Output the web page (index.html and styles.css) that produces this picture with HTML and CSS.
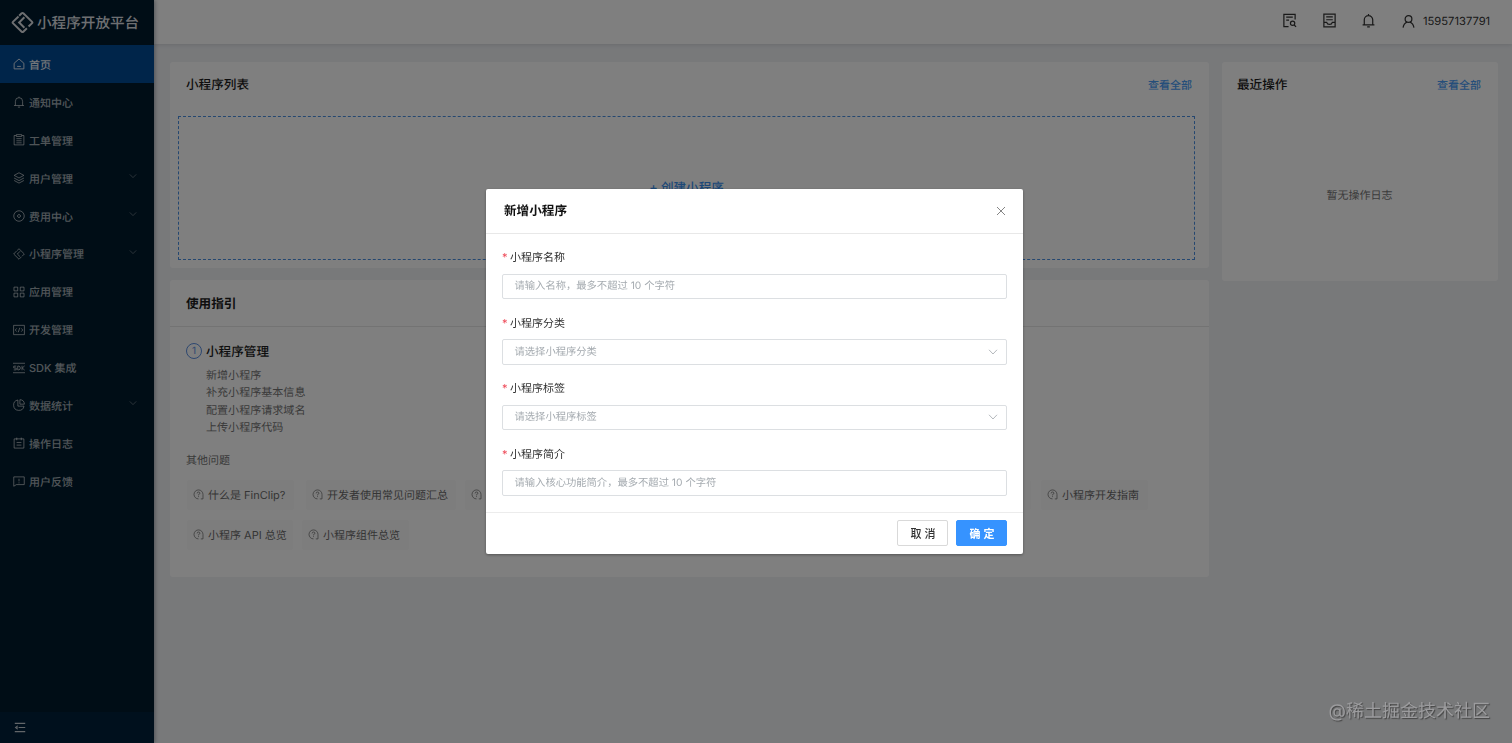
FILE: index.html
```html
<!DOCTYPE html>
<html lang="zh-CN">
<head>
<meta charset="utf-8">
<title>小程序开放平台</title>
<link rel="stylesheet" href="styles.css">
</head>
<body>
<div class="app">
  <aside class="sidebar">
    <div class="brand">
      <svg class="brand-logo" viewBox="0 0 22 22"><path d="M7.200 5.300 1.800 10.400q-.6.600 0 1.200l8.400 8.200q.8.700 1.600 0l3.400-3.300M7.800 4.600l2.400-2.400q.8-.7 1.600 0l8.400 8.200q.6.600 0 1.200l-3.400 3.300M12.800 6 7.800 11l5 5"/></svg>
      <span>小程序开放平台</span>
    </div>
    <nav class="menu">
      <a class="item active"><svg viewBox="0 0 16 16"><path d="M1.500 7 8 1.300 14.500 7v7.500h-13zM5.500 11.200h5"/></svg><span>首页</span></a>
      <a class="item"><svg viewBox="0 0 16 16"><path d="M3.200 12.500V7a4.800 4.800 0 0 1 9.600 0v5.500M1.300 12.700h13.400M8 .8v1.400M6.500 14.800h3"/></svg><span>通知中心</span></a>
      <a class="item"><svg viewBox="0 0 16 16"><path d="M4 2H1.500v12.500h13V2H12M4.500.8h7v2.500h-7zM4.500 6.200h7M4.500 9h7M4.500 11.800h7"/></svg><span>工单管理</span></a>
      <a class="item"><svg viewBox="0 0 16 16"><path d="m8 1 6.500 3.500L8 8 1.500 4.500zM1.500 8 8 11.500 14.500 8M1.500 11.300 8 14.800l6.500-3.500"/></svg><span>用户管理</span><svg class="arrow" viewBox="0 0 10 10"><path d="m1 3 4 4 4-4"/></svg></a>
      <a class="item"><svg viewBox="0 0 16 16"><circle cx="8" cy="8" r="7"/><path d="m8 5.500 2.500 2.500L8 10.500 5.500 8zM8 7.500v1"/></svg><span>费用中心</span><svg class="arrow" viewBox="0 0 10 10"><path d="m1 3 4 4 4-4"/></svg></a>
      <a class="item"><svg viewBox="0 0 16 16"><path d="M5 3.800.9 8 8 15l3.200-3.200M5.500 3.300 8 1l7.100 7-3 3M9.500 4.300 5.800 8l3.700 3.700"/></svg><span>小程序管理</span><svg class="arrow" viewBox="0 0 10 10"><path d="m1 3 4 4 4-4"/></svg></a>
      <a class="item"><svg viewBox="0 0 16 16"><path d="M1.300 1.500h5v5h-5zM9.700 1.500h5v5h-5zM1.300 9.500h5v5h-5zM9.700 9.500h5v5h-5z"/></svg><span>应用管理</span></a>
      <a class="item"><svg viewBox="0 0 16 16"><path d="M.8 1.800h14.400v12.400H.8zM5 5.800 3 8l2 2.200M11 5.800 13 8l-2 2.200M9 5l-2 6"/></svg><span>开发管理</span></a>
      <a class="item"><svg class="wide" viewBox="0 0 16 16"><path d="M0 1.700h16M0 14.300h16M4.300 5.500H1V8h3.300v2.500H1M6.300 5.500v5h1.500q2-.3 2-2.500t-2-2.500zM12 5v6M15.500 5.200 12.300 8l3.200 2.800"/></svg><span>SDK 集成</span></a>
      <a class="item"><svg viewBox="0 0 16 16"><path d="M6.500 1.300A7 7 0 1 0 14.700 9.500H6.500zM9.200.9v6h6A6.300 6.300 0 0 0 9.200.9z"/></svg><span>数据统计</span><svg class="arrow" viewBox="0 0 10 10"><path d="m1 3 4 4 4-4"/></svg></a>
      <a class="item"><svg viewBox="0 0 16 16"><path d="M1.500 2.500h13v12.300h-13zM5 .8v3.500M11 .8v3.500M4.800 7.300h6.400M4.800 10.800h6.400"/></svg><span>操作日志</span></a>
      <a class="item"><svg viewBox="0 0 16 16"><path d="M1 2.500h14v10.300H4.500L1 15zM8 5v3.500M8 9.800v1.400"/></svg><span>用户反馈</span></a>
    </nav>
    <div class="collapse"><svg viewBox="0 0 12 12"><path d="M.3 1.500h11.400M4.500 6h7.200M.3 10.500h11.400M2.800 4.800 1.200 6l1.600 1.200z"/></svg></div>
  </aside>

  <div class="page">
    <header class="topbar">
      <svg class="tool" viewBox="0 0 16 16"><path d="M7 14.500H2V1.500h12V7M4.500 4.500h7M4.500 7.500h3M13 12.800l2 2"/><circle cx="11.300" cy="11" r="2.300"/></svg>
      <svg class="tool" viewBox="0 0 16 16"><path d="M2 1.200h12v13.600H2zM4.500 4.200h7M4.500 7.200h7M2 10h3q.5 2.200 3 2.200t3-2.200h3"/></svg>
      <svg class="tool" viewBox="0 0 16 16"><path d="M3.500 12.500V7.300a4.500 4.500 0 0 1 9 0v5.200M1.700 12.700h12.600M8 1v1.800M6.600 14.800h2.800"/></svg>
      <svg class="tool user" viewBox="0 0 16 16"><circle cx="8" cy="5.400" r="3.600"/><path d="M2.200 14.500q.7-4.500 4.200-5.900M13.800 14.500q-.7-4.500-4.200-5.900"/></svg>
      <span class="phone">15957137791</span>
    </header>

    <main class="content">
      <div class="primary">
        <section class="card apps">
          <div class="card-head"><h2>小程序列表</h2><a>查看全部</a></div>
          <div class="create"><span>+ 创建小程序</span></div>
        </section>
        <section class="card guide">
          <div class="guide-head"><h2>使用指引</h2></div>
          <div class="step"><span class="num">1</span><h2>小程序管理</h2></div>
          <ul class="steps">
            <li>新增小程序</li>
            <li>补充小程序基本信息</li>
            <li>配置小程序请求域名</li>
            <li>上传小程序代码</li>
          </ul>
          <div class="other">其他问题</div>
          <div class="chips">
            <a class="chip w1"><svg viewBox="0 0 12 12"><path d="M6 10.800A4.900 4.900 0 1 1 10.900 6v4.800H8.500M4.500 4.800q0-1.500 1.500-1.500t1.500 1.300Q7.500 5.700 6 6.200v.7M6 7.900v.9"/></svg>什么是 FinClip?</a>
            <a class="chip w2"><svg viewBox="0 0 12 12"><path d="M6 10.800A4.900 4.900 0 1 1 10.900 6v4.800H8.500M4.500 4.800q0-1.500 1.500-1.500t1.500 1.300Q7.500 5.700 6 6.200v.7M6 7.900v.9"/></svg>开发者使用常见问题汇总</a>
            <a class="chip w3"><svg viewBox="0 0 12 12"><path d="M6 10.800A4.900 4.900 0 1 1 10.900 6v4.800H8.500M4.500 4.800q0-1.500 1.500-1.500t1.500 1.300Q7.500 5.700 6 6.200v.7M6 7.900v.9"/></svg></a>
            <a class="chip w4"><svg viewBox="0 0 12 12"><path d="M6 10.800A4.900 4.900 0 1 1 10.900 6v4.800H8.500M4.500 4.800q0-1.500 1.500-1.500t1.500 1.300Q7.500 5.700 6 6.200v.7M6 7.900v.9"/></svg>小程序开发指南</a>
          </div>
          <div class="chips second">
            <a class="chip w5"><svg viewBox="0 0 12 12"><path d="M6 10.800A4.900 4.900 0 1 1 10.900 6v4.800H8.500M4.500 4.800q0-1.500 1.500-1.500t1.500 1.300Q7.500 5.700 6 6.200v.7M6 7.900v.9"/></svg>小程序 API 总览</a>
            <a class="chip w6"><svg viewBox="0 0 12 12"><path d="M6 10.800A4.900 4.900 0 1 1 10.900 6v4.800H8.500M4.500 4.800q0-1.500 1.500-1.500t1.500 1.300Q7.500 5.700 6 6.200v.7M6 7.900v.9"/></svg>小程序组件总览</a>
          </div>
        </section>
      </div>
      <section class="card recent">
        <div class="card-head"><h2>最近操作</h2><a>查看全部</a></div>
        <div class="empty">暂无操作日志</div>
      </section>
    </main>
  </div>
</div>

<div class="mask">
  <div class="modal">
    <div class="modal-head"><h3>新增小程序</h3><svg viewBox="0 0 10 10"><path d="m1 1 8 8M9 1 1 9"/></svg></div>
    <div class="form">
      <div class="field"><label><i>*</i>小程序名称</label><div class="input">请输入名称，最多不超过 10 个字符</div></div>
      <div class="field"><label><i>*</i>小程序分类</label><div class="input">请选择小程序分类<svg viewBox="0 0 10 10"><path d="m1 2.800 4 4.200 4-4.200"/></svg></div></div>
      <div class="field"><label><i>*</i>小程序标签</label><div class="input">请选择小程序标签<svg viewBox="0 0 10 10"><path d="m1 2.800 4 4.200 4-4.200"/></svg></div></div>
      <div class="field"><label><i>*</i>小程序简介</label><div class="input">请输入核心功能简介，最多不超过 10 个字符</div></div>
    </div>
    <div class="modal-foot"><button>取 消</button><button class="ok">确 定</button></div>
  </div>
</div>
<div class="watermark">@稀土掘金技术社区</div>
</body>
</html>
```

FILE: styles.css
```css
* { box-sizing: border-box; }
body { margin: 0; overflow: hidden; font-family: Inter, "Noto Sans CJK SC", sans-serif; font-size: 11px; line-height: 16px; text-rendering: geometricPrecision; }
svg { fill: none; stroke: currentColor; flex: none; }
h2, h3 { margin: 0; padding-top: 2px; font-size: 12.6px; line-height: 18px; font-weight: 500; }
.app { display: flex; height: 743px; background: #f0f2f5; }

.sidebar { width: 154px; display: flex; flex-direction: column; background: #001529; background: #001a2c; color: rgba(255,255,255,.65); box-shadow: 1px 0 4px rgba(0,21,41,.35); z-index: 1; }
.brand { height: 45px; padding: 0 0 1px 11px; display: flex; align-items: center; gap: 3px; font-size: 14.600px; font-weight: 500; color: #dcdfe2; white-space: nowrap; }
.brand span { padding-top: 1px; }
.brand-logo { width: 23px; height: 23px; stroke-width: 1.900; }
.menu { flex: 1; }
.item { display: flex; align-items: center; height: 37.900px; padding: 1px 15px 0 13px; gap: 4px; font-weight: 500; }
.item span { padding-top: 1px; }
.item svg { width: 12px; height: 12px; stroke-width: 1.200; }
.item .arrow { width: 8px; height: 8px; margin-left: auto; margin-right: 2px; position: relative; top: -2px; opacity: .65; stroke-width: 1; }
.active { background: #004a94; color: #e8eef5; }
.collapse { height: 31px; padding: 10px 14px; background: #00203a; color: #c4ccd2; }
.collapse svg { display: block; width: 12px; height: 11px; stroke-width: 1.200; }

.page { flex: 1; display: flex; flex-direction: column; }
.topbar { height: 44px; padding: 0 20px 2px 0; display: flex; align-items: center; justify-content: flex-end; background: #fff; box-shadow: 0 1px 4px rgba(0,21,41,.12); color: #333; }
.tool { width: 15px; height: 15px; margin: -2px 24.600px 0 0; stroke-width: 1.300; }
.user { margin: 0 7px 0 0; }
.phone { font-size: 11.200px; width: 69px; white-space: nowrap; }
.content { display: flex; align-items: flex-start; gap: 13px; padding: 18px 14px 0 16px; }
.primary { width: 1039px; display: flex; flex-direction: column; gap: 12px; }
.card { background: #fff; border-radius: 3px; }
.apps { height: 206px; padding: 14px 14px 0 8px; }
.card-head { display: flex; justify-content: space-between; align-items: center; height: 18px; padding: 0 2px 0 8px; }
.card-head a { color: #4a9cf5; font-weight: 500; }
.apps .card-head a { margin-right: 1px; }
.card-head h2, .guide h2 { color: #1c1c1c; }
.create { display: flex; align-items: center; justify-content: center; height: 144px; margin-top: 22px; padding-top: 1px; border: 1px dashed #4a8ee0; color: #3a90ee; font-size: 12.600px; font-weight: 500; }
.guide { height: 297px; }
.guide-head { height: 47px; padding: 14px 16px; border-bottom: 1px solid #e6e6e6; }
.guide-head h2 { font-weight: 600; }
.step { display: flex; align-items: center; gap: 4px; padding: 15px 16px 0; height: 34px; }
.num { width: 16px; height: 16px; margin-top: -1px; border: 1px solid #5b8fe0; border-radius: 50%; color: #5b8fe0; font-size: 10px; line-height: 14px; text-align: center; }
.steps { list-style: none; margin: 6px 0 0; padding: 0 0 0 36px; font-size: 11.050px; line-height: 17.400px; color: #747474; }
.other { margin: 15px 0 0 16px; color: #747474; }
.chips { display: flex; height: 30px; margin: 12px 0 0 17px; color: #6a6a6a; }
.second { margin-top: 10px; }
.chip { display: flex; align-items: center; gap: 4px; padding-left: 6px; background: #fbfbfb; border-radius: 2px; white-space: nowrap; }
.chip svg { width: 11px; height: 11px; stroke-width: .8; }
.w1 { width: 107px; margin-right: 12px; }
.w2 { width: 150px; margin-right: 9px; }
.w3 { width: 566px; margin-right: 10px; }
.w4 { width: 107px; }
.w5 { width: 106px; margin-right: 9px; }
.w6 { width: 107px; }
.recent { width: 276px; height: 219px; padding: 14px 15px 0 7px; }
.empty { margin-top: 93px; padding-left: 7px; color: #777; text-align: center; }

.mask { position: fixed; inset: 0; z-index: 5; padding: 189px 0 0 486px; background: rgba(0,0,0,.5); }
.modal { width: 537px; height: 364.500px; background: #fff; border-radius: 2px; box-shadow: 0 1px 3px rgba(0,0,0,.35); }
.modal-head { display: flex; align-items: center; justify-content: space-between; height: 45px; padding: 0 17px 0 18px; border-bottom: 1px solid #e8e8e8; color: #111; }
.modal-head h3 { font-weight: 600; }
.modal-head svg { width: 10px; height: 10px; color: #777; stroke-width: .9; }
.form { padding: 15px 16px 0; height: 278px; }
.field { height: 65.500px; }
label { display: flex; align-items: center; height: 16px; color: #333; }
label i { width: 8px; color: #ee4a58; font-style: normal; font-size: 11px; }
.input { display: flex; align-items: center; justify-content: space-between; height: 25.500px; margin-top: 8.500px; padding: 0 8px 0 11.500px; border: 1px solid #dcdfe2; border-radius: 2px; font-size: 10.300px; color: #a5abb0; }
.input svg { width: 10px; height: 10px; color: #b5b9bd; stroke-width: 1; }
.modal-foot { display: flex; justify-content: flex-end; gap: 8px; height: 41px; padding: 7px 16px; border-top: 1px solid #ececec; }
button { width: 51px; height: 26px; padding: 1px 0 0 1px; background: #fff; border: 1px solid #d9d9d9; border-radius: 2px; color: #333; font: 500 11px/22px Inter, "Noto Sans CJK SC", sans-serif; }
.ok { background: #3693ff; border-color: #3693ff; color: #fff; font-weight: 600; }
.watermark { position: fixed; z-index: 6; right: 22px; bottom: 18.500px; font-size: 18px; line-height: 26px; color: #9c9c9e; text-shadow: 1px 1px 1px #444; white-space: nowrap; }
```
